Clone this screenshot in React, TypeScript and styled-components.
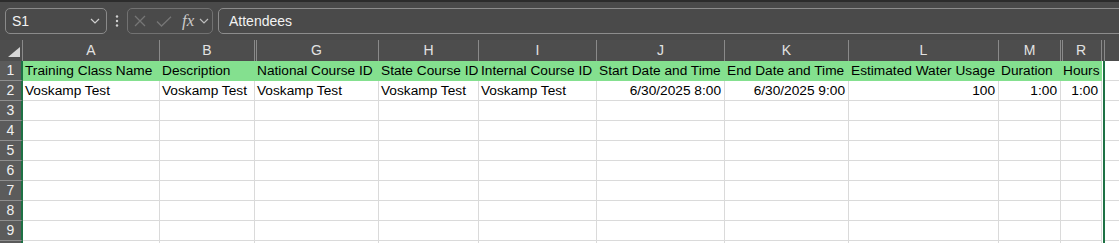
import React from "react";
import styled, { createGlobalStyle, css } from "styled-components";

type Col = {
    key: string
    width: number
    title: string
    value: string
    num?: boolean
    hiddenBefore?: boolean
}

const columns: Col[] = [
    { key: 'A', width: 137, title: 'Training Class Name', value: 'Voskamp Test' },
    { key: 'B', width: 95, title: 'Description', value: 'Voskamp Test' },
    { key: 'G', width: 124, title: 'National Course ID', value: 'Voskamp Test', hiddenBefore: true },
    { key: 'H', width: 100, title: 'State Course ID', value: 'Voskamp Test' },
    { key: 'I', width: 118, title: 'Internal Course ID', value: 'Voskamp Test' },
    { key: 'J', width: 128, title: 'Start Date and Time', value: '6/30/2025 8:00', num: true },
    { key: 'K', width: 124, title: 'End Date and Time', value: '6/30/2025 9:00', num: true },
    { key: 'L', width: 150, title: 'Estimated Water Usage', value: '100', num: true },
    { key: 'M', width: 62, title: 'Duration', value: '1:00', num: true },
    { key: 'R', width: 41, title: 'Hours', value: '1:00', num: true, hiddenBefore: true },
]

const GRID = '#dadada'
const FILL = '#84e08f'
const SELECT = '#1d7144'

const GlobalStyle = createGlobalStyle`
    html, body { margin: 0; padding: 0; background: #fff; }
    body { font-family: "Liberation Sans", Arial, sans-serif; overflow: hidden; }
`

export default function App() {
    const rows = [1, 2, 3, 4, 5, 6, 7, 8, 9]
    return (
        <Frame>
            <GlobalStyle />
            <FormulaBar>
                <NameBox>
                    <span>S1</span>
                    <Chevron color="#cfcfcf" />
                </NameBox>
                <Dots>
                    <svg width="4" height="12" viewBox="0 0 4 12">
                        <circle cx="2" cy="1.5" r="1.2" fill="#d0d0d0" />
                        <circle cx="2" cy="6" r="1.2" fill="#d0d0d0" />
                        <circle cx="2" cy="10.5" r="1.2" fill="#d0d0d0" />
                    </svg>
                </Dots>
                <FxGroup>
                    <svg width="12" height="12" viewBox="0 0 12 12">
                        <path d="M1 1L11 11M11 1L1 11" stroke="#767676" strokeWidth="1.3" fill="none" />
                    </svg>
                    <svg width="16" height="11" viewBox="0 0 16 11">
                        <path d="M1 5.5L5.5 10L15 0.8" stroke="#767676" strokeWidth="1.3" fill="none" />
                    </svg>
                    <FxLabel>fx</FxLabel>
                    <Chevron color="#bdbdbd" />
                </FxGroup>
                <FormulaInput>Attendees</FormulaInput>
            </FormulaBar>

            <HeaderRow>
                <Corner>
                    <svg width="12" height="10" viewBox="0 0 12 10">
                        <path d="M0 10L12 10L12 0Z" fill="#d6d6d6" />
                    </svg>
                </Corner>
                {columns.map(c => (
                    <ColHead key={c.key} $w={c.width} $hiddenBefore={c.hiddenBefore}>{c.key}</ColHead>
                ))}
                <ColHead $w={3} $hiddenBefore={false} />
                <HeadRest />
            </HeaderRow>

            {rows.map(r => (
                <Row key={r}>
                    <RowHead>{r}</RowHead>
                    {columns.map(c => (
                        <Cell key={c.key} $w={c.width} $fill={r === 1} $num={r === 2 && c.num}>
                            {r === 1 ? c.title : r === 2 ? c.value : ''}
                        </Cell>
                    ))}
                    <SelectEdge />
                    <RestCell />
                </Row>
            ))}
            <Row>
                <RowHead />
                {columns.map(c => (
                    <Cell key={c.key} $w={c.width} />
                ))}
                <SelectEdge />
                <RestCell />
            </Row>
        </Frame>
    )
}

function Chevron({ color }: { color: string }) {
    return (
        <svg width="10" height="6" viewBox="0 0 10 6">
            <path d="M1 1L5 5L9 1" stroke={color} strokeWidth="1.2" fill="none" />
        </svg>
    )
}

const Frame = styled.div`
    width: 1119px;
    height: 243px;
    overflow: hidden;
    background: #fff;
`

const FormulaBar = styled.div`
    height: 40px;
    background: #4a4a4a;
    border-top: 2px solid #2c2c2c;
    display: flex;
    align-items: flex-start;
    padding: 6px 0 0 5px;
    box-sizing: border-box;
    color: #f2f2f2;
    font-size: 14px;
`

const boxBase = css`
    height: 26px;
    box-sizing: border-box;
    border-radius: 5px;
    display: flex;
    align-items: center;
`

const NameBox = styled.div`
    ${boxBase};
    width: 102px;
    border: 1px solid #8a8a8a;
    padding: 0 6px 0 6px;
    justify-content: space-between;
`

const Dots = styled.div`
    width: 20px;
    height: 26px;
    display: flex;
    align-items: center;
    justify-content: center;
`

const FxGroup = styled.div`
    ${boxBase};
    width: 86px;
    border: 1px solid #727272;
    padding-left: 6px;
    gap: 10px;

    & > svg:last-child {
        margin-left: -5px;
    }
`

const FxLabel = styled.span`
    font-family: "Liberation Serif", "DejaVu Serif", serif;
    font-style: italic;
    font-size: 17px;
    color: #c9c9c9;
    line-height: 1;
    margin-top: -2px;
`

const FormulaInput = styled.div`
    ${boxBase};
    flex: 1;
    margin: 0 -10px 0 5px;
    border: 1px solid #8c8c8c;
    padding-left: 10px;
`

const HeaderRow = styled.div`
    display: flex;
    height: 21px;
    background: #4d4d4d;
`

const Corner = styled.div`
    width: 23px;
    border-right: 1px solid #8a8a8a;
    box-sizing: border-box;
    display: flex;
    align-items: flex-end;
    justify-content: flex-end;
    padding: 0 2px 4px 0;
`

const ColHead = styled.div<{ $w: number; $hiddenBefore?: boolean }>`
    width: ${p => p.$w}px;
    flex: none;
    box-sizing: border-box;
    border-right: 1px solid #8a8a8a;
    color: #e2e2e2;
    font-size: 14px;
    line-height: 21px;
    text-align: center;
    ${p => p.$hiddenBefore && css`
        background: linear-gradient(to right, transparent 1px, #8a8a8a 1px, #8a8a8a 2px, transparent 2px);
    `}
`

const HeadRest = styled.div`
    flex: 1;
`

const Row = styled.div`
    display: flex;
    height: 20px;
`

const RowHead = styled.div`
    width: 23px;
    flex: none;
    box-sizing: border-box;
    background: #5b5b5b;
    border-right: 2px solid ${SELECT};
    border-bottom: 1px solid #8e8e8e;
    color: #f0f0f0;
    font-size: 14px;
    line-height: 19px;
    text-align: center;
`

const Cell = styled.div<{ $w: number; $fill?: boolean; $num?: boolean }>`
    width: ${p => p.$w}px;
    flex: none;
    box-sizing: border-box;
    border-right: 1px solid ${p => (p.$fill ? FILL : GRID)};
    border-bottom: 1px solid ${p => (p.$fill ? FILL : GRID)};
    background: ${p => (p.$fill ? FILL : '#fff')};
    color: #000;
    font-size: 13.7px;
    line-height: 20px;
    padding: 0 3px 0 2px;
    white-space: nowrap;
    overflow: hidden;
    text-align: ${p => (p.$num ? 'right' : 'left')};
`

const SelectEdge = styled.div`
    width: 3px;
    flex: none;
    box-sizing: border-box;
    border-left: 1px solid #fff;
    background: ${SELECT};
`

const RestCell = styled.div`
    flex: 1;
    border-bottom: 1px solid ${GRID};
`
